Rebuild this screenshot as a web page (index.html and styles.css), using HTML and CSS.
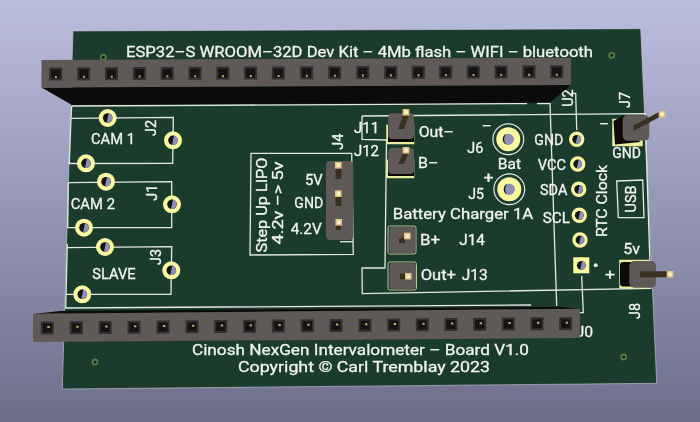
FILE: index.html
```html
<!DOCTYPE html>
<html lang="en">
<head>
<meta charset="utf-8">
<title>Cinosh NexGen Intervalometer PCB</title>
<link rel="stylesheet" href="styles.css">
</head>
<body>
<svg class="scene" width="700" height="422" viewBox="0 0 700 422" xmlns="http://www.w3.org/2000/svg">
<defs>
  <linearGradient id="bg" x1="0" y1="0" x2="0" y2="1">
    <stop offset="0" stop-color="#bcbedf"/>
    <stop offset="1" stop-color="#6e6e8b"/>
  </linearGradient>
  <g id="sockT"><rect x="-6.5" y="-6.5" width="13" height="13" class="sock"/><rect x="-4.5" y="-4.5" width="9" height="9" class="sockin"/><rect x="-0.8" y="2" width="2" height="2" class="gold"/></g>
  <g id="sockB"><rect x="-6.5" y="-6.5" width="13" height="13" class="sock"/><rect x="-4.5" y="-4.5" width="9" height="9" class="sockin"/><rect x="0" y="-2" width="2.4" height="2" class="gold"/></g>
  <g id="hole"><circle r="9" class="ring"/><circle r="4.8" class="bore"/><path d="M1 -4.7A4.8 4.8 0 0 1 -1 4.7Z" class="boreL"/></g>
  <g id="holeS"><circle r="7.7" class="ring"/><circle r="4.4" class="bore"/><path d="M1 -4.3A4.4 4.4 0 0 1 -1 4.3Z" class="boreL"/></g>
  <g id="holeB"><circle r="15.4" class="hollow"/><circle r="12" class="ring"/><circle r="5.6" class="boreP"/><path d="M-2 -5.2A5.6 5.6 0 0 0 -2 5.2A7 7 0 0 1 -2 -5.2Z" class="bore"/></g>
  <g id="via"><circle r="3.4" class="viaring"/><circle r="1.6" class="viacore"/></g>
</defs>

<rect width="700" height="422" fill="url(#bg)"/>
<polygon points="73,31 640.7,28.7 656.7,383.3 62.3,389" class="board"/>

<use href="#via" x="103.3" y="57.3"/><use href="#via" x="611.7" y="55.3"/><use href="#via" x="95" y="362"/><use href="#via" x="623.7" y="357"/>

<!-- silkscreen outlines -->
<g class="silk">
  <polyline points="71.7,106 527,103.6"/>
  <polyline points="537,103.5 550,103.4 556.7,306"/>
  <polyline points="71.7,106 71,118.3 173.3,117.3 172.7,163.3 69.3,163.5 71,118.3"/>
  <polyline points="68.3,182.7 171.7,181.7 171.7,227.7 67.3,227.7"/>
  <line x1="68.3" y1="182.7" x2="67.7" y2="227"/>
  <polyline points="67.3,244 65.7,308 531,305"/>
  <polyline points="67,247.7 171.7,246.7 171,294.3 66,294.3"/>
  <polyline points="362,116 645,113.6 650.8,288.3 362.3,293.7 362,268 385,268 386.5,140 362,139.4 362,116"/>
  <polygon points="251,153.3 351.7,153.3 353.3,254.3 250,255"/>
  <line x1="340" y1="241.7" x2="353" y2="241.7"/>
  <polyline points="571,93.3 575.7,93.3 576.7,130"/>
  <polyline points="581.7,276 583.3,312.7 579,312.7"/>
  <polygon points="616.7,181 642.7,180 644,217.7 618.3,217.7"/>
</g>

<!-- mounting holes -->
<use href="#hole" x="107.7" y="118"/><use href="#hole" x="173" y="140.3"/><use href="#hole" x="86" y="163.3"/>
<use href="#hole" x="106" y="181.7"/><use href="#hole" x="172" y="204.3"/><use href="#hole" x="84" y="227.7"/>
<use href="#hole" x="105" y="247"/><use href="#hole" x="171.3" y="270.3"/><use href="#hole" x="82.3" y="294.3"/>
<use href="#holeB" x="508.3" y="139.3"/><use href="#holeB" x="509.3" y="189.3"/>
<use href="#holeS" x="576.7" y="139.3"/><use href="#holeS" x="577.7" y="164"/><use href="#holeS" x="578.7" y="189.3"/><use href="#holeS" x="579.3" y="215.3"/><use href="#holeS" x="580" y="240"/>
<rect x="573.3" y="257.3" width="16" height="16" class="ringfill"/><use href="#holeS" x="581.3" y="265.3"/>
<circle cx="595.7" cy="265.3" r="2" class="dot"/>

<!-- silkscreen text -->
<g class="t">
  <text x="126" y="57" textLength="467" lengthAdjust="spacingAndGlyphs" class="big">ESP32–S WROOM–32D Dev Kit – 4Mb flash – WIFI – bluetooth</text>
  <text x="192" y="355" textLength="337" lengthAdjust="spacingAndGlyphs" class="big">Cinosh NexGen Intervalometer – Board V1.0</text>
  <text x="238" y="372" textLength="252" lengthAdjust="spacingAndGlyphs" class="big">Copyright © Carl Tremblay 2023</text>

  <text x="91" y="144" textLength="44" lengthAdjust="spacingAndGlyphs">CAM 1</text>
  <text x="70.7" y="209" textLength="44.3" lengthAdjust="spacingAndGlyphs">CAM 2</text>
  <text x="92.3" y="279.3" textLength="43.4" lengthAdjust="spacingAndGlyphs">SLAVE</text>

  <text transform="translate(156,128) rotate(-90)" text-anchor="middle">J2</text>
  <text transform="translate(156.5,192.7) rotate(-90)" text-anchor="middle">J1</text>
  <text transform="translate(161,257) rotate(-90)" text-anchor="middle">J3</text>
  <text transform="translate(342.5,141.7) rotate(-90)" text-anchor="middle">J4</text>
  <text transform="translate(266.5,205) rotate(-90)" text-anchor="middle" textLength="95" lengthAdjust="spacingAndGlyphs">Step Up LIPO</text>
  <text transform="translate(283,203) rotate(-90)" text-anchor="middle" textLength="83" lengthAdjust="spacingAndGlyphs">4.2v –&gt; 5v</text>
  <text x="305" y="185" textLength="17.7" lengthAdjust="spacingAndGlyphs">5V</text>
  <text x="294.3" y="208.3" textLength="29" lengthAdjust="spacingAndGlyphs">GND</text>
  <text x="290.7" y="234" textLength="31" lengthAdjust="spacingAndGlyphs">4.2V</text>

  <text x="354" y="133.3" textLength="25.3" lengthAdjust="spacingAndGlyphs">J11</text>
  <text x="354" y="156" textLength="25" lengthAdjust="spacingAndGlyphs">J12</text>
  <text x="418.7" y="137.3" textLength="35.3" lengthAdjust="spacingAndGlyphs">Out–</text>
  <text x="418" y="168.3" textLength="20.3" lengthAdjust="spacingAndGlyphs">B–</text>
  <text x="481.7" y="131" textLength="10" lengthAdjust="spacingAndGlyphs">–</text>
  <text x="467.3" y="152.7" textLength="16" lengthAdjust="spacingAndGlyphs">J6</text>
  <text x="497.7" y="169.3" textLength="23.3" lengthAdjust="spacingAndGlyphs">Bat</text>
  <text x="483.5" y="182.5" textLength="10" lengthAdjust="spacingAndGlyphs">+</text>
  <text x="468.3" y="198.7" textLength="15.7" lengthAdjust="spacingAndGlyphs">J5</text>
  <text x="534.3" y="145" textLength="29" lengthAdjust="spacingAndGlyphs">GND</text>
  <text x="537.7" y="170" textLength="28.3" lengthAdjust="spacingAndGlyphs">VCC</text>
  <text x="540" y="195" textLength="27.3" lengthAdjust="spacingAndGlyphs">SDA</text>
  <text x="542.7" y="222.7" textLength="27.3" lengthAdjust="spacingAndGlyphs">SCL</text>
  <text x="392.7" y="219.3" textLength="140.6" lengthAdjust="spacingAndGlyphs">Battery Charger 1A</text>
  <text x="420" y="245.3" textLength="20" lengthAdjust="spacingAndGlyphs">B+</text>
  <text x="459.3" y="245.3" textLength="25.7" lengthAdjust="spacingAndGlyphs">J14</text>
  <text x="420.7" y="280.3" textLength="35.3" lengthAdjust="spacingAndGlyphs">Out+</text>
  <text x="461.7" y="280.3" textLength="26" lengthAdjust="spacingAndGlyphs">J13</text>
  <text transform="translate(606.5,201) rotate(-90)" text-anchor="middle" textLength="72" lengthAdjust="spacingAndGlyphs">RTC Clock</text>
  <text transform="translate(636,199) rotate(-90)" text-anchor="middle" textLength="27" lengthAdjust="spacingAndGlyphs">USB</text>
  <text transform="translate(572.5,98) rotate(-90)" text-anchor="middle">U2</text>
  <text transform="translate(630,100) rotate(-90)" text-anchor="middle">J7</text>
  <text x="612.3" y="158.3" textLength="28.7" lengthAdjust="spacingAndGlyphs">GND</text>
  <text x="599" y="128.5" textLength="10" lengthAdjust="spacingAndGlyphs">–</text>
  <text x="623.3" y="254.3" textLength="16.7" lengthAdjust="spacingAndGlyphs">5v</text>
  <text x="605" y="280" textLength="10" lengthAdjust="spacingAndGlyphs">+</text>
  <text transform="translate(640,311) rotate(-90)" text-anchor="middle">J8</text>
  <text x="574" y="336.5" textLength="19" lengthAdjust="spacingAndGlyphs">U0</text>
</g>

<!-- top pin header -->
<polygon points="41.5,87.5 571,85 550,102.6 72,105" class="shade"/>
<polygon points="41.5,60 571,57.7 571,85 41.5,87.5" class="face"/>
<use href="#sockT" x="55.7" y="74"/><use href="#sockT" x="83.7" y="73.8"/><use href="#sockT" x="111.5" y="73.7"/><use href="#sockT" x="139.4" y="73.5"/><use href="#sockT" x="167.2" y="73.4"/><use href="#sockT" x="195" y="73.3"/><use href="#sockT" x="222.8" y="73.2"/><use href="#sockT" x="250.6" y="73"/><use href="#sockT" x="278.4" y="73"/><use href="#sockT" x="306.6" y="72.8"/><use href="#sockT" x="334.7" y="72.7"/><use href="#sockT" x="362.7" y="72.5"/><use href="#sockT" x="390.7" y="72.4"/><use href="#sockT" x="418.3" y="72.3"/><use href="#sockT" x="445.7" y="72.2"/><use href="#sockT" x="473.3" y="72"/><use href="#sockT" x="501" y="71.9"/><use href="#sockT" x="529" y="71.8"/><use href="#sockT" x="556.7" y="71.7"/>

<!-- bottom pin header -->
<polygon points="60,311 560,306.8 580,309 33,314" class="shade"/>
<polygon points="33,313.7 580,308.7 580,338 33,342" class="face"/>
<use href="#sockB" x="47.3" y="328"/><use href="#sockB" x="76.3" y="327.8"/><use href="#sockB" x="105.2" y="327.5"/><use href="#sockB" x="134" y="327.3"/><use href="#sockB" x="163" y="327"/><use href="#sockB" x="192" y="326.8"/><use href="#sockB" x="220.7" y="326.5"/><use href="#sockB" x="249.6" y="326.3"/><use href="#sockB" x="278.4" y="326"/><use href="#sockB" x="307.3" y="325.8"/><use href="#sockB" x="336" y="325.5"/><use href="#sockB" x="365" y="325.3"/><use href="#sockB" x="393.7" y="325"/><use href="#sockB" x="422.3" y="324.8"/><use href="#sockB" x="451" y="324.5"/><use href="#sockB" x="479.7" y="324.3"/><use href="#sockB" x="508.3" y="324"/><use href="#sockB" x="537" y="323.8"/><use href="#sockB" x="565.7" y="323.7"/>

<!-- J4 three pin header -->
<rect x="326" y="161" width="27.3" height="79" rx="4" class="bodyh"/>
<path d="M335.5 168h6v11h-6z" class="stem"/><path d="M335.5 197h6v9h-6z" class="stem"/><path d="M336 225h5v5h-5z" class="stem"/>
<rect x="335" y="162" width="6.6" height="6.6" class="goldb"/><rect x="335" y="190.4" width="6.6" height="6.6" class="goldb"/><rect x="335.4" y="219" width="6.6" height="6.6" class="goldb"/>
<rect x="336.7" y="163.4" width="3.4" height="3.4" class="goldc"/><rect x="336.7" y="191.9" width="3.4" height="3.4" class="goldc"/><rect x="337" y="220.5" width="3.4" height="3.4" class="goldc"/>

<!-- single pin headers -->
<g>
  <rect x="386.5" y="125" width="27.5" height="19" class="padedge"/><rect x="388" y="125" width="26" height="17" class="shade"/>
  <rect x="388.3" y="113.3" width="25.7" height="25.7" rx="4" class="bodyh"/>
  <polygon points="403,115 409,115 404,129 398.3,129" class="stem"/>
  <rect x="402.7" y="109" width="6.6" height="6.6" class="goldb"/><rect x="404.4" y="110.6" width="3.4" height="3.4" class="goldc"/>

  <rect x="386.5" y="160" width="27.5" height="18" class="padedge"/><rect x="388" y="160" width="26" height="16" class="shade"/>
  <rect x="388.3" y="148" width="25.7" height="26" rx="4" class="bodyh"/>
  <polygon points="403,152 409,152 404,164 398.5,164" class="stem"/>
  <rect x="402.7" y="147" width="6.6" height="6.6" class="goldb"/><rect x="404.4" y="148.6" width="3.4" height="3.4" class="goldc"/>

  <rect x="388" y="226" width="28" height="28" rx="2" class="padthin"/>
  <rect x="389.3" y="226.7" width="26" height="26.6" rx="4" class="bodyh"/>
  <polygon points="403,237 405,239 405,243 399,243 399,239" class="stem"/>
  <rect x="404" y="232.7" width="6.6" height="6.6" class="goldb"/><rect x="405.6" y="234.3" width="3.4" height="3.4" class="goldc"/>

  <rect x="388" y="262" width="28.5" height="28" rx="2" class="padthin"/>
  <rect x="389.5" y="262.7" width="26.5" height="26.6" rx="4" class="bodyh"/>
  <rect x="400" y="273.5" width="6" height="6" class="stem"/>
  <rect x="405" y="273" width="6.6" height="6.6" class="goldb"/><rect x="406.6" y="274.6" width="3.4" height="3.4" class="goldc"/>

  <rect x="612.5" y="119" width="30" height="27" class="padedge"/><polygon points="613.5,121 624,115 640,142 615,144.5" class="shade"/>
  <rect x="622.7" y="115" width="26.6" height="25.7" rx="5" class="bodyh"/>
  <polygon points="633.3,125.5 660,111.5 661.5,116 633.3,131" class="stem"/>
  <rect x="658.7" y="111" width="6.6" height="6.6" class="goldb"/><rect x="660.4" y="112.6" width="3.4" height="3.4" class="goldc"/>

  <rect x="619.5" y="260" width="30" height="28.5" class="padedge"/><rect x="620" y="262" width="14" height="24.5" rx="3" class="shade"/>
  <rect x="629.3" y="261" width="26.7" height="26.7" rx="5" class="bodyh"/>
  <rect x="640" y="271.3" width="28" height="6" class="stem"/>
  <rect x="666.7" y="271" width="6.6" height="6.6" class="goldb"/><rect x="668.4" y="272.6" width="3.4" height="3.4" class="goldc"/>
</g>
</svg>
</body>
</html>
```
FILE: styles.css
```css
html, body {
  margin: 0;
  padding: 0;
  background: #9496b5;
}
.scene {
  display: block;
  width: 700px;
  height: 422px;
  filter: blur(0.35px);
}
.board { fill: #1b3b2c; stroke: #c9cbd6; stroke-width: 0.6; }
.silk polyline, .silk polygon, .silk line {
  fill: none;
  stroke: #e6e8e4;
  stroke-width: 1.3;
}
.t text {
  font-family: Roboto, sans-serif;
  font-size: 14.5px;
  fill: #f1f3ef;
  stroke: #f1f3ef;
  stroke-width: 0.3px;
}
.ring { fill: #f9f79f; }
.ringfill { fill: #f9f79f; }
.bore { fill: #14141a; }
.boreL { fill: #8f90b4; }
.boreP { fill: #8f90b4; }
.hollow { fill: none; stroke: #e8eae6; stroke-width: 1.2; }
.dot { fill: #e8eae6; }
.viaring { fill: #5c7a45; }
.viacore { fill: #12201a; }
.shade { fill: #0b0b0b; }
.face { fill: #5f5a58; }
.sock { fill: #323130; }
.sockin { fill: #141414; }
.gold { fill: #c9a564; }
.bodyh { fill: #5f5a57; }
.stem { fill: #3a3020; }
.goldb { fill: #e3c487; }
.goldc { fill: #fbf0c8; }
.padedge { fill: #f0ee9a; stroke: #e8e6b0; stroke-width: 0.5; }
.padthin { fill: #1b3b2c; stroke: #e8e6a8; stroke-width: 0.8; }
```
